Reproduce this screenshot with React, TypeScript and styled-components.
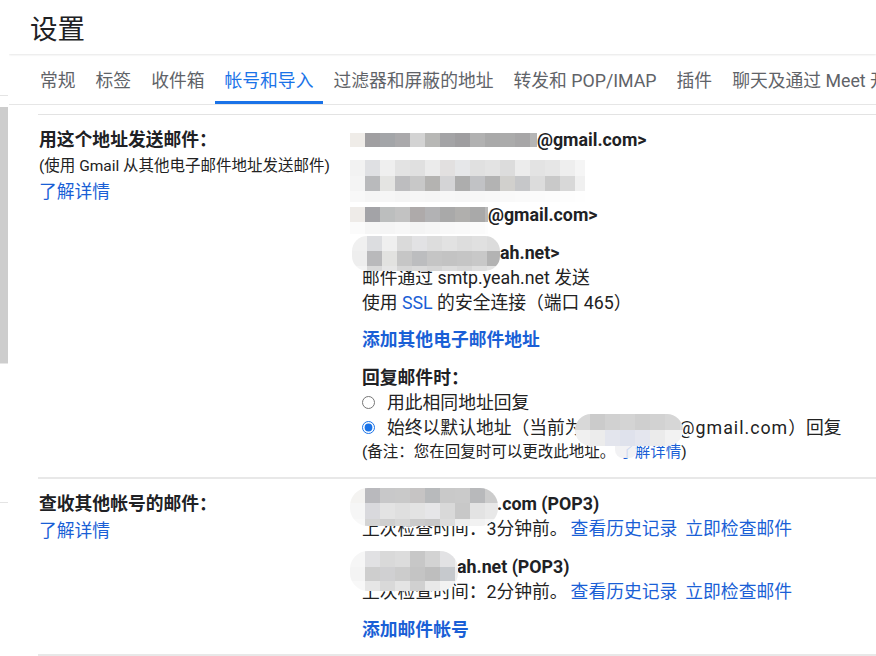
import styled, { createGlobalStyle } from "styled-components";

const GlobalStyle = createGlobalStyle`
  html, body {
    margin: 0;
    padding: 0;
    background: #fff;
    overflow: hidden;
  }
  body {
    font-family: Roboto, "Noto Sans CJK SC", "Noto Sans", sans-serif;
    color: #202124;
  }
`;

const Page = styled.div`
  display: flex;
  width: 876px;
  height: 656px;
  overflow: hidden;
`;

const NavStrip = styled.div`
  flex: 0 0 9px;
  display: flex;
  flex-direction: column;
  padding-top: 95px;
`;

const NavRule = styled.div<{ $gap?: number }>`
  width: 8px;
  height: 1px;
  margin-top: ${({ $gap }) => $gap ?? 0}px;
  background: #e4e4e4;
`;

const NavScroll = styled.div`
  width: 8px;
  height: 256px;
  margin-top: 11px;
  background: #cdcdcd;
  border-bottom: 1px solid #e6e6e6;
`;

const Main = styled.div`
  flex: 1;
  min-width: 0;
  overflow: hidden;
`;

const Header = styled.div`
  height: 54px;
  padding-left: 21px;
  display: flex;
  align-items: center;
  box-shadow: 0 1px 2px rgba(0, 0, 0, 0.1);
  position: relative;
`;

const Title = styled.h1`
  margin: 0;
  font-size: 27.5px;
  font-weight: 400;
  color: #202124;
`;

const TabBar = styled.div`
  display: flex;
  height: 51px;
  box-sizing: border-box;
  padding-left: 21px;
  border-bottom: 1px solid #e6e6e6;
  white-space: nowrap;
  overflow: hidden;
`;

const Tab = styled.div<{ $active?: boolean }>`
  flex: none;
  display: flex;
  align-items: center;
  padding: 3px 10px 0;
  font-size: 17.8px;
  color: ${({ $active }) => ($active ? "#1a73e8" : "#5f6368")};
  border-bottom: 3px solid ${({ $active }) => ($active ? "#1a73e8" : "transparent")};
`;

const Table = styled.div`
  margin: 9px 0 0 29px;
  border-top: 1px solid #e3e3e3;
`;

const Section = styled.div`
  display: grid;
  grid-template-columns: 312px 1fr;
  padding: 12px 0 12px;
  border-bottom: 2px solid #e8e8e8;
  font-size: 17.8px;
  line-height: 25px;
`;

const LabelCol = styled.div`
  padding-left: 1px;
  display: flex;
  flex-direction: column;
`;

const Label = styled.div`
  font-size: 17.8px;
  font-weight: 700;
  color: #202124;
  margin-bottom: 2px;
`;

const Hint = styled.div`
  font-size: 15.5px;
  color: #222;
`;

const Link = styled.a<{ $bold?: boolean }>`
  color: #1a5fd6;
  text-decoration: none;
  font-weight: ${({ $bold }) => ($bold ? 700 : 400)};
  cursor: pointer;
`;

const Actions = styled.span`
  display: inline-flex;
  gap: 8px;
  margin-left: 3px;
`;

const ValueCol = styled.div`
  padding-left: 12px;
  display: flex;
  flex-direction: column;
  min-width: 0;
`;

const Line = styled.div<{ $gap?: number; $h?: number }>`
  height: ${({ $h }) => $h ?? 25}px;
  margin-top: ${({ $gap }) => $gap ?? 0}px;
  white-space: nowrap;
  color: #222;
`;

const Strong = styled.span`
  font-weight: 700;
  color: #202124;
`;

const RadioRow = styled.label`
  display: flex;
  align-items: center;
  height: 25px;
  white-space: nowrap;
  color: #222;
`;

const Radio = styled.input`
  width: 13px;
  height: 13px;
  margin: 0 12px 0 0;
  accent-color: #1a73e8;
`;

const Address = styled.span`
  letter-spacing: 1px;
`;

const Note = styled.div`
  font-size: 15.5px;
  height: 25px;
  white-space: nowrap;
  color: #222;
`;

const Veiled = styled.span`
  position: relative;

  &::before {
    content: "";
    position: absolute;
    left: -4px;
    top: -3px;
    width: 22px;
    height: 18px;
    background: rgba(240, 240, 242, 0.85);
    border-radius: 0 0 8px 8px;
  }
`;

/* pixelated privacy blur */
const Redacted = styled.span<{ $w: number; $h?: number; $shift?: number }>`
  display: inline-block;
  position: relative;
  vertical-align: top;
  width: ${({ $w }) => $w}px;
  height: ${({ $h }) => $h ?? 25}px;
  margin-left: ${({ $shift }) => $shift ?? -12}px;
`;

const Patch = styled.span<{ $top: number; $left: number; $width: number; $radius: number }>`
  position: absolute;
  z-index: 1;
  top: ${({ $top }) => $top}px;
  left: ${({ $left }) => $left}px;
  width: ${({ $width }) => $width}px;
  display: flex;
  flex-direction: column;
  overflow: hidden;
  border-radius: ${({ $radius }) => $radius}px;
  filter: blur(0.4px);
`;

const PatchRow = styled.span<{ $h: number }>`
  display: flex;
  height: ${({ $h }) => $h}px;
`;

const Cell = styled.span`
  flex: 0 0 15px;
  height: 100%;
`;

type Mosaic = {
  top: number;
  left?: number;
  width: number;
  radius?: number;
  rows: { h: number; c: string[] }[];
};

function Blur({ w, h, shift, m }: { w: number; h?: number; shift?: number; m: Mosaic }) {
  return (
    <Redacted $w={w} $h={h} $shift={shift}>
      <Patch $top={m.top} $left={m.left ?? 0} $width={m.width} $radius={m.radius ?? 0}>
        {m.rows.map((r, i) => (
          <PatchRow key={i} $h={r.h}>
            {r.c.map((c, j) => (
              <Cell key={j} style={{ background: c }} />
            ))}
          </PatchRow>
        ))}
      </Patch>
    </Redacted>
  );
}

const m1: Mosaic = {
  top: 6,
  width: 187,
  rows: [
    { h: 14, c: ["#efece8", "#a09fa1", "#a3a5a8", "#aaa9ab", "#d3d3d3", "#b7b7b5", "#a4a4a6", "#9f9ea0", "#b1b1b1", "#a9a9a9", "#ababab", "#a7a6a7", "#b5b5b5"] },
  ],
};

const m2: Mosaic = {
  top: 8,
  width: 235,
  rows: [
    { h: 16, c: ["#f2f2f2", "#dfe0e3", "#efefef", "#e3e3e3", "#e0e0e0", "#ebebeb", "#e2e0e0", "#e6e7e9", "#e0e0e0", "#e3e3e3", "#dcdcdc", "#ececec", "#e3e3e3", "#e6e6e6", "#eeeeee", "#f5f5f5"] },
    { h: 15, c: ["#f4f4f4", "#b9babc", "#e4e4e2", "#bdbdbf", "#c8c8c8", "#b4b3b1", "#d4d4d6", "#adadad", "#c1c2c5", "#b3b3b3", "#d1d0cd", "#c6c7c9", "#dcdcdc", "#c9c9c9", "#d8d8d8", "#f0f0f0"] },
    { h: 11, c: ["#f8f8f8", "#f5f5f5", "#f6f6f6", "#f4f4f4", "#f6f6f6", "#f5f5f5", "#f7f7f7", "#f6f6f6", "#f7f7f7", "#f8f8f8", "#f9f9f9", "#fafafa", "#fbfbfb", "#fcfcfc", "#fdfdfd", "#fefefe"] },
  ],
};

const m3: Mosaic = {
  top: 5,
  width: 138,
  rows: [
    { h: 15, c: ["#eeebe8", "#a3a3a7", "#bcbebe", "#c2c2c2", "#aeaaaa", "#b2b2b4", "#a9a9a9", "#b0afad", "#a9a9a9", "#b9b9b9"] },
    { h: 12, c: ["#fbfbfb", "#f6f6f6", "#f5f5f5", "#f7f7f7", "#f4f4f4", "#f6f6f6", "#f8f8f8", "#f9f9f9", "#fbfbfb", "#fdfdfd"] },
  ],
};

const m4: Mosaic = {
  top: -4,
  left: 2,
  width: 148,
  radius: 15,
  rows: [
    { h: 15, c: ["#f0f0f0", "#dcdde0", "#efefef", "#dadada", "#e2e2e4", "#dddddd", "#e2e2e2", "#dddddd", "#e0e0e0", "#dcdcdc"] },
    { h: 15, c: ["#eeeeee", "#b9b9bb", "#e2e2e0", "#c6c6c6", "#bcbdbf", "#c5c5c5", "#c3c3c3", "#c5c5c5", "#c8c8c8", "#b3b3b3"] },
    { h: 5, c: ["#f4f4f4", "#d9d9d9", "#e6e6e6", "#d6d6d6", "#dadada", "#d5d5d5", "#dcdcdc", "#d7d7d7", "#dfdfdf", "#e4e4e4"] },
  ],
};

const mReply: Mosaic = {
  top: -1,
  left: -8,
  width: 108,
  radius: 16,
  rows: [
    { h: 16, c: ["#d8d8d8", "#cbcbcb", "#d1d1d1", "#d4d4d4", "#cfcfcf", "#d2d2d2", "#d6d6d6", "#dcdcdc"] },
    { h: 16, c: ["#f0f0f0", "#ececec", "#e3e5ed", "#dfe2ec", "#e4e6ee", "#ebebeb", "#f2f2f2", "#f5f5f5"] },
  ],
};

const m5: Mosaic = {
  top: -3,
  width: 148,
  radius: 18,
  rows: [
    { h: 15, c: ["#f4f3f1", "#b9b9bd", "#c8c8c9", "#c9c9c9", "#c6c4c4", "#b8babc", "#c9c9c9", "#cacaca", "#b8b9bb", "#cccccc"] },
    { h: 16, c: ["#f6f6f6", "#d9d9dd", "#e3e3e3", "#dfdfdf", "#e3e3e3", "#e6e6e8", "#d9d9d9", "#c8c8c8", "#e3e3e3", "#e8e8e8"] },
    { h: 7, c: ["#f8f8f8", "#d4d4d4", "#cfcfcf", "#d6d6d6", "#cbcbcb", "#c8c8c8", "#dddddd", "#eeeeee", "#f2f2f2", "#f6f6f6"] },
  ],
};

const m6: Mosaic = {
  top: -3,
  width: 108,
  radius: 18,
  rows: [
    { h: 16, c: ["#f6f6f6", "#e1e1e3", "#d9d9d9", "#dcdcdc", "#c7c7c7", "#d3d3d3", "#e2e2e4", "#f0f0f0"] },
    { h: 14, c: ["#f4f4f4", "#cecece", "#d0d0d2", "#cccccc", "#c4c4c4", "#bebebe", "#c6c9cd", "#eeeeee"] },
    { h: 10, c: ["#f8f8f8", "#e6e6e6", "#d9d9d9", "#e4e4e4", "#d0d0d0", "#e8e8e8", "#f2f2f2", "#f8f8f8"] },
  ],
};

const tabs = [
  "常规",
  "标签",
  "收件箱",
  "帐号和导入",
  "过滤器和屏蔽的地址",
  "转发和 POP/IMAP",
  "插件",
  "聊天及通过 Meet 开会",
];

export default function App() {
  return (
    <Page>
      <GlobalStyle />
      <NavStrip>
        <NavRule />
        <NavScroll />
        <NavRule $gap={138} />
      </NavStrip>
      <Main>
        <Header>
          <Title>设置</Title>
        </Header>
        <TabBar>
          {tabs.map((t) => (
            <Tab key={t} $active={t === "帐号和导入"}>
              {t}
            </Tab>
          ))}
        </TabBar>

        <Table>
          <Section>
            <LabelCol>
              <Label>用这个地址发送邮件：</Label>
              <Hint>(使用 Gmail 从其他电子邮件地址发送邮件)</Hint>
              <div>
                <Link>了解详情</Link>
              </div>
            </LabelCol>
            <ValueCol>
              <Line>
                <Blur w={187} m={m1} />
                <Strong>@gmail.com&gt;</Strong>
              </Line>
              <Line $h={50}>
                <Blur w={235} h={50} m={m2} />
              </Line>
              <Line>
                <Blur w={138} m={m3} />
                <Strong>@gmail.com&gt;</Strong>
              </Line>
              <Line $gap={13}>
                <Blur w={150} m={m4} />
                <Strong>ah.net&gt;</Strong>
              </Line>
              <Line>邮件通过 smtp.yeah.net 发送</Line>
              <Line>
                使用 <Link>SSL</Link> 的安全连接（端口 465）
              </Line>
              <Line $gap={12}>
                <Link $bold>添加其他电子邮件地址</Link>
              </Line>
              <Line $gap={13}>
                <Strong>回复邮件时：</Strong>
              </Line>
              <RadioRow>
                <Radio type="radio" name="reply" />
                用此相同地址回复
              </RadioRow>
              <RadioRow>
                <Radio type="radio" name="reply" defaultChecked />
                <span>
                  始终以默认地址（当前为
                  <Blur w={96} shift={0} m={mReply} />
                  <Address>@gmail.com</Address>）回复
                </span>
              </RadioRow>
              <Note>
                (备注：您在回复时可以更改此地址。{" "}
                <Veiled>
                  <Link>了解详情</Link>
                </Veiled>
                )
              </Note>
            </ValueCol>
          </Section>

          <Section>
            <LabelCol>
              <Label>查收其他帐号的邮件：</Label>
              <div>
                <Link>了解详情</Link>
              </div>
            </LabelCol>
            <ValueCol>
              <Line>
                <Blur w={147} m={m5} />
                <Strong>.com (POP3)</Strong>
              </Line>
              <Line>
                上次检查时间：3分钟前。
                <Actions>
                  <Link>查看历史记录</Link>
                  <Link>立即检查邮件</Link>
                </Actions>
              </Line>
              <Line $gap={13}>
                <Blur w={107} m={m6} />
                <Strong>ah.net (POP3)</Strong>
              </Line>
              <Line>
                上次检查时间：2分钟前。
                <Actions>
                  <Link>查看历史记录</Link>
                  <Link>立即检查邮件</Link>
                </Actions>
              </Line>
              <Line $gap={13}>
                <Link $bold>添加邮件帐号</Link>
              </Line>
            </ValueCol>
          </Section>
        </Table>
      </Main>
    </Page>
  );
}
